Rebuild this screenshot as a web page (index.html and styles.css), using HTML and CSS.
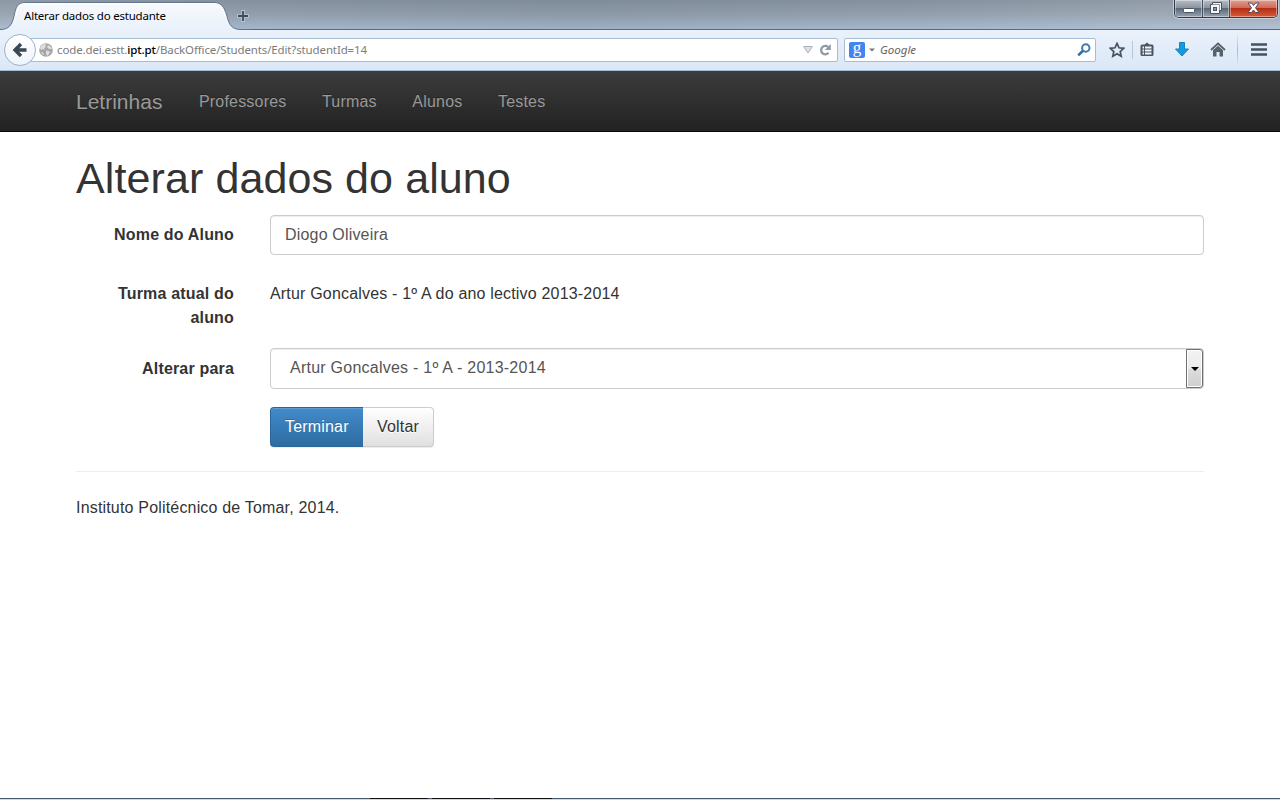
FILE: index.html
```html
<!DOCTYPE html>
<html lang="pt">
<head>
<meta charset="utf-8">
<title>Alterar dados do estudante</title>
<link rel="stylesheet" href="styles.css">
</head>
<body>
<header class="titlebar">
  <div class="tab">
    <svg class="tab-shape" width="250" height="30" viewBox="0 0 250 30">
      <defs><linearGradient id="tabfill" x1="0" y1="0" x2="0" y2="1"><stop offset="0" stop-color="#f7fafd"/><stop offset="1" stop-color="#eaf1fb"/></linearGradient></defs>
      <path d="M0 30V29.500C9 29.500 12 25 14 16C16 7 17 2.500 26 2.500H213C222 2.500 224 7 227 16C229 25 232 29.500 241 29.500V30Z" fill="url(#tabfill)"/>
      <path d="M0 29.500C9 29.500 12 25 14 16C16 7 17 2.500 26 2.500H213C222 2.500 224 7 227 16C229 25 232 29.500 241 29.500H250" fill="none" stroke="#60758c"/>
      <path d="M16 16C18 7 19 3.500 26 3.500H213C220 3.500 222 7 225 16" fill="none" stroke="#fff"/>
    </svg>
    <span class="tab-title">Alterar dados do estudante</span>
  </div>
  <svg class="newtab" width="12" height="12" viewBox="0 0 12 12"><path d="M6 0V12M0 6H12" stroke="#b9c4cf" stroke-width="3.500"/><path d="M6 1V11M1 6H11" stroke="#3f4b58" stroke-width="1.800"/></svg>
  <div class="window-buttons">
    <span class="wb minimize"><svg width="12" height="6" viewBox="0 0 12 6"><rect x=".5" y=".5" width="11" height="4" rx="1" fill="#fff" stroke="#4c5363"/></svg></span>
    <span class="wb restore"><svg width="12" height="12" viewBox="0 0 12 12"><path d="M2.500 .5H11.500V8.500H9.500V11.500H.5V2.500H2.500Z" fill="#f4f5f7" stroke="#4c5363"/><path d="M3 2.500H9.500V9" fill="none" stroke="#4c5363" stroke-width=".6"/><rect x="3.500" y="5.500" width="3" height="3" fill="#8a95a4" stroke="#4c5363"/></svg></span>
    <span class="wb close"><svg width="13" height="12" viewBox="0 0 13 12"><path d="M1 1H4.500L6.500 3.500L8.500 1H12L8.500 5.800L12 10.500H8.500L6.500 8L4.500 10.500H1L4.500 5.800Z" fill="#fff" stroke="#5b4a58"/></svg></span>
  </div>
</header>
<div class="toolbar">
  <div class="back"><svg width="16" height="16" viewBox="0 0 16 16"><path d="M14.500 8H4M9 2L3 8L9 14" fill="none" stroke="#3b4854" stroke-width="3.400"/></svg></div>
  <div class="urlbar">
    <svg class="globe" width="14" height="14" viewBox="0 0 14 14"><circle cx="7" cy="7" r="6.800" fill="#a6a6a6"/><path d="M2 3L5 1L7.500 1.500L6 3L7 4L5 5.500L6 7L3.500 6L2 7L1 5ZM9 2L12 4L13 6L10 6L8 4ZM7 7.500L10 8L11 9.500L8.500 13L7 11ZM2 9L4 9.500L5 12L3 11Z" fill="#dedede"/></svg>
    <span class="url">code.dei.estt.<b>ipt.pt</b>/BackOffice/Students/Edit?studentId=14</span>
    <svg class="drop" width="10" height="8" viewBox="0 0 10 8"><path d="M.7.500H9.300L5 7Z" fill="#dce2e8" stroke="#a7b2bd"/></svg>
    <svg class="reload" width="12" height="12" viewBox="0 0 12 12"><path d="M9.200 3A4.200 4.200 0 1 0 9.600 8.800" fill="none" stroke="#909ba7" stroke-width="2.300"/><path d="M11.800 0V6H5.800Z" fill="#909ba7"/></svg>
  </div>
  <div class="search">
    <span class="engine">g</span>
    <svg width="6" height="4" viewBox="0 0 6 4"><path d="M0 .5H6L3 3.500Z" fill="#777"/></svg>
    <span class="search-hint">Google</span>
    <svg class="lens" width="14" height="14" viewBox="0 0 14 14"><circle cx="8.800" cy="5" r="3.700" fill="none" stroke="#397cad" stroke-width="2"/><path d="M6 7.800L1.200 12.400" stroke="#326fa4" stroke-width="2.600"/></svg>
  </div>
  <div class="tools">
    <svg class="star" width="16" height="16" viewBox="0 0 16 16"><path d="M8 1.400L10 5.800L14.800 6.300L11.200 9.500L12.200 14.300L8 11.800L3.800 14.300L4.800 9.500L1.200 6.300L6 5.800Z" fill="none" stroke="#48545f" stroke-width="1.700"/></svg>
    <i class="thin"></i>
    <svg class="clip" width="14" height="15" viewBox="0 0 14 15"><path d="M4.500 2.500L7 .5L9.500 2.500H12Q13.500 2.500 13.500 4V12.500Q13.500 14 12 14H2Q.5 14 .5 12.500V4Q.5 2.500 2 2.500Z" fill="#48545f"/><path d="M2.500 5.500H4M5 5.500H11.500M2.500 8.500H4M5 8.500H11.500M2.500 11.500H4M5 11.500H11.500" stroke="#f0f5fb" stroke-width="1.800"/></svg>
    <svg class="down" width="14" height="15" viewBox="0 0 14 15"><path d="M4.500 .5H9.500V7H13.500L7 14L.5 7H4.500Z" fill="#139bdc" stroke="#1485bd"/></svg>
    <svg class="home" width="16" height="15" viewBox="0 0 16 15"><path d="M1 8L8 1.500L15 8" fill="none" stroke="#57616b" stroke-width="1.800"/><path d="M3 8.300L8 3.800L13 8.300V14.500H9.500V10H6.500V14.500H3Z" fill="#57616b"/></svg>
    <i class="rule"></i>
    <svg class="menu" width="16" height="13" viewBox="0 0 16 13"><path d="M0 1.500H16M0 6.500H16M0 11.500H16" stroke="#46525e" stroke-width="2.600"/></svg>
  </div>
</div>
<div class="page">
  <nav class="navbar">
    <a class="brand">Letrinhas</a>
    <a>Professores</a><a>Turmas</a><a>Alunos</a><a>Testes</a>
  </nav>
  <main class="container">
    <h1>Alterar dados do aluno</h1>
    <form class="form">
      <label class="l1">Nome do Aluno</label>
      <div class="control name">Diogo Oliveira</div>
      <label class="l2">Turma atual do aluno</label>
      <div class="static">Artur Goncalves - 1º A do ano lectivo 2013-2014</div>
      <label class="l3">Alterar para</label>
      <div class="control select"><span>Artur Goncalves - 1º A - 2013-2014</span><span class="arrow"><svg width="8" height="4" viewBox="0 0 8 4"><path d="M0 0H8L4 4Z"/></svg></span></div>
      <div class="buttons"><span class="btn primary">Terminar</span><span class="btn">Voltar</span></div>
    </form>
    <hr>
    <footer>Instituto Politécnico de Tomar, 2014.</footer>
  </main>
</div>
<div class="taskbar"><i></i><i></i><i></i></div>
</body>
</html>
```
FILE: styles.css
```css
* { box-sizing: border-box; }
body { margin: 0; height: 800px; overflow: hidden; display: flex; flex-direction: column; background: #fff; color: #333; font: 16px/24px "Liberation Sans", Arial, sans-serif; }
svg { display: block; flex: none; }
.titlebar { height: 30px; flex: none; display: flex; align-items: flex-start; background: radial-gradient(ellipse at 5px 10px, #b9cddd 0, transparent 24px), linear-gradient(90deg, rgba(255,255,255,.08), transparent 20%, rgba(40,60,80,.06) 45%, transparent 70%, rgba(255,255,255,.15)), linear-gradient(#84909d, #929fad 50%, #a4b7cd); border-bottom: 1px solid #566b80; font-family: "Noto Sans", sans-serif; }
.tab { width: 237px; height: 30px; flex: none; display: grid; }
.tab > * { grid-area: 1 / 1; }
.tab-title { z-index: 1; padding: 4px 0 0 24px; color: #000; font-size: 11.500px; letter-spacing: -.21px; white-space: nowrap; }
.newtab { margin-top: 10px; }
.window-buttons { display: flex; width: 104px; height: 18px; margin-left: auto; margin-right: 2px; border: 1px solid #323d4b; border-top: 0; border-radius: 0 0 5px 5px; box-shadow: 0 0 0 1px rgba(230,238,247,.55); overflow: hidden; }
.wb { display: flex; justify-content: center; width: 28px; background: linear-gradient(#b5bec8, #8a95a2 45%, #5d6876 50%, #95a4b5); border-right: 1px solid #47515e; box-shadow: inset 0 0 0 1px rgba(255,255,255,.4); }
.restore { width: 27px; }
.close { flex: 1; border: 0; background: linear-gradient(#dda092, #cf6b57 45%, #b62e15 50%, #d45d38); }
.minimize svg { margin-top: 8px; }
.restore svg { margin-top: 2px; }
.close svg { margin-top: 2px; }
.toolbar { height: 41px; flex: none; display: flex; align-items: center; background: linear-gradient(#eaf1fb, #dae8f7); border-bottom: 1px solid #a4bad0; padding: 0 0 1px 4px; font: 11.500px/20px "Noto Sans", sans-serif; }
.back { width: 32px; height: 32px; flex: none; border: 1px solid #9eb3c9; border-radius: 50%; background: linear-gradient(#fff, #edf4fb); display: grid; place-items: center; z-index: 1; }
.urlbar, .search { height: 24px; background: #fff; border: 1px solid #a9bdd1; border-radius: 2px; display: flex; align-items: center; }
.urlbar { width: 808px; margin-left: -6px; padding: 0 6px 0 8px; }
.url { margin-left: 4px; padding-top: 1px; color: #7c7c7c; letter-spacing: -.13px; white-space: nowrap; }
.url b { color: #000; font-weight: 500; }
.drop { margin-left: auto; margin-right: 6px; }
.search { width: 252px; margin-left: 6px; padding: 0 4px; }
.engine { width: 16px; height: 16px; margin-right: 4px; border-radius: 2px; background: #4384f3; color: #fff; text-align: center; font: 17px/12px "Liberation Serif", serif; }
.search-hint { margin-left: 5px; padding-top: 1px; color: #666; font-style: italic; font-size: 11.500px; }
.lens { margin-left: auto; }
.tools { display: flex; flex: 1; align-items: center; }
.star { margin-left: 13px; }
.thin { width: 1px; height: 18px; background: #b7c8d9; margin-left: 7px; }
.clip { margin-left: 7px; }
.down { margin-left: 21px; }
.home { margin-left: 21px; }
.rule { width: 1px; height: 36px; margin-left: 11px; background: linear-gradient(transparent, #a9bbcc, transparent); }
.menu { margin-left: 13px; }
.page { flex: 1; display: flex; flex-direction: column; }
.navbar { height: 61px; display: flex; align-items: center; padding: 2px 0 0 76px; background: linear-gradient(#3c3c3c, #222); border-bottom: 1px solid #080808; color: #999; text-shadow: 0 -1px 0 rgba(0,0,0,.25); }
.navbar a { margin-right: 35.500px; letter-spacing: .2px; }
.navbar .brand { font-size: 21px; letter-spacing: 0; margin-right: 36.500px; }
.container { width: 1128px; margin: 0 auto; letter-spacing: .18px; }
h1 { margin: 21px 0 12px; font-size: 43px; line-height: 50px; font-weight: 500; letter-spacing: .1px; }
.form { display: grid; grid-template-columns: 158px 934px; column-gap: 36px; grid-template-rows: 40px 93px 41px 40px; }
label { font-weight: bold; text-align: right; }
.l1 { padding-top: 8px; }
.l2 { padding-top: 27px; }
.l3 { padding-top: 9px; }
.static { padding-top: 27px; }
.control { border: 1px solid #ccc; border-radius: 4px; box-shadow: inset 0 1px 1px rgba(0,0,0,.075); color: #555; }
.name { padding: 7px 14px; }
.select { display: flex; justify-content: space-between; padding-left: 19px; line-height: 37px; letter-spacing: .24px; }
.arrow { width: 17px; border: 1px solid #707070; border-radius: 0 3px 3px 0; background: linear-gradient(#f2f2f2, #ebebeb 50%, #ddd 51%, #cfcfcf); box-shadow: inset 0 0 0 1px #fff; display: grid; place-items: center; }
.buttons { grid-column: 2; margin-top: 18px; display: flex; height: 40px; }
.btn { border: 1px solid #ccc; border-left: 0; border-radius: 0 4px 4px 0; padding: 7px 14px; width: 71px; background: linear-gradient(#fff, #e0e0e0); box-shadow: inset 0 1px 0 rgba(255,255,255,.15), 0 1px 1px rgba(0,0,0,.075); text-shadow: 0 1px 0 #fff; white-space: nowrap; }
.primary { width: 93px; border: 1px solid #2b669a; border-right: 0; border-radius: 4px 0 0 4px; color: #fff; background: linear-gradient(#428bca, #2d6ca2); text-shadow: 0 -1px 0 rgba(0,0,0,.2); }
hr { border: 0; border-top: 1px solid #eee; margin: 42px 0 24px; }
.taskbar { height: 2px; flex: none; display: flex; gap: 4px; padding-left: 370px; background: linear-gradient(#47586c 50%, #cbdbea 50%); }
.taskbar i { width: 58px; height: 1px; background: #111; }
```
